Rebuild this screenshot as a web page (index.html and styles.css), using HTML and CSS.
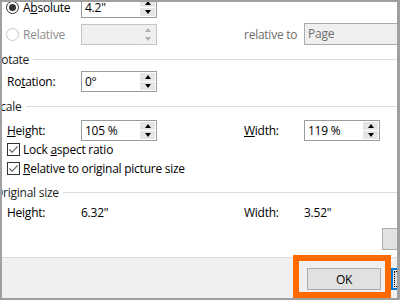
FILE: index.html
```html
<!DOCTYPE html>
<html>
<head>
<meta charset="utf-8">
<link rel="stylesheet" href="styles.css">
</head>
<body>
<div class="frame">
  <div class="content">
    <div class="row r-first">
      <label class="opt"><span class="radio checked"></span><span>A<u>b</u>solute</span></label>
      <div class="box"><span class="val">4.2"</span><span class="spin"><i class="up"></i><i class="down"></i></span></div>
    </div>
    <div class="row r-2">
      <label class="opt disabled"><span class="radio"></span><span>Relative</span></label>
      <div class="box off"><span class="val"></span><span class="spin"><i class="up"></i><i class="down"></i></span></div>
      <span class="gap"></span>
      <span class="lbl dim">relative to</span>
      <div class="combo">Page</div>
    </div>
    <div class="heading h-rotate"><span>Rotate</span><span class="rule"></span></div>
    <div class="row r-rot">
      <span class="lbl">Ro<u>t</u>ation:</span>
      <div class="box"><span class="val">0°</span><span class="spin"><i class="up"></i><i class="down"></i></span></div>
    </div>
    <div class="heading h-scale"><span>Scale</span><span class="rule"></span></div>
    <div class="row r-height">
      <span class="lbl"><u>H</u>eight:</span>
      <div class="box"><span class="val">105 %</span><span class="spin"><i class="up"></i><i class="down"></i></span></div>
      <span class="gap"></span>
      <span class="lbl"><u>W</u>idth:</span>
      <div class="box"><span class="val">119 %</span><span class="spin"><i class="up"></i><i class="down"></i></span></div>
    </div>
    <label class="check c-lock"><span class="cb"><svg width="11" height="11" viewBox="0 0 11 11"><path d="M1.5 5.5 L4.2 8.3 L9.6 2.4" fill="none" stroke="#555" stroke-width="1.1"/></svg></span><span>Lock <u>a</u>spect ratio</span></label>
    <label class="check c-rel"><span class="cb"><svg width="11" height="11" viewBox="0 0 11 11"><path d="M1.5 5.5 L4.2 8.3 L9.6 2.4" fill="none" stroke="#555" stroke-width="1.1"/></svg></span><span><u>R</u>elative to original picture size</span></label>
    <div class="heading h-orig"><span>Original size</span><span class="rule"></span></div>
    <div class="row r-static">
      <span class="lbl">Height:</span>
      <span class="num">6.32"</span>
      <span class="gap"></span>
      <span class="lbl">Width:</span>
      <span class="num">3.52"</span>
    </div>
    <div class="btnrow">
      <button class="btn reset">Reset</button>
    </div>
  </div>
  <div class="footer">
    <div class="highlight"><button class="btn ok">OK</button></div>
    <button class="btn default"><span class="focus">Cancel</span></button>
  </div>
</div>
</body>
</html>
```
FILE: styles.css
```css
* { box-sizing: border-box; }
html, body { margin: 0; padding: 0; }
body {
  width: 400px;
  height: 300px;
  overflow: hidden;
  background: #fff;
  font-family: "Open Sans", "Noto Sans", sans-serif;
  font-size: 12px;
  letter-spacing: -0.25px;
  color: #000;
}
u { text-decoration: underline; text-underline-offset: 1px; }

.frame {
  width: 400px;
  height: 300px;
  border-style: solid;
  border-color: #a0a0a0;
  border-width: 2px 3px 2px 2px;
  overflow: hidden;
  display: flex;
  flex-direction: column;
}
.content {
  height: 255px;
  flex: none;
  display: flex;
  flex-direction: column;
  background: #fff;
}
.row {
  display: grid;
  grid-template-columns: 74px 76px 87px 60px 100px;
  align-items: center;
  padding-left: 5px;
  height: 21px;
  flex: none;
}
.r-first { margin-top: -5px; }
.r-2 { margin-top: 5px; }
.r-rot { margin-top: 4px; }
.r-height { margin-top: 6px; }
.r-static { margin-top: 4px; height: 16px; }

.opt { display: flex; align-items: center; gap: 4px; margin-left: -1px; white-space: nowrap; }
.opt.disabled { color: #8d8d8d; }
.radio {
  width: 13px; height: 13px; border-radius: 50%;
  border: 1px solid #333; background: #fff;
  display: flex; align-items: center; justify-content: center; flex: none;
}
.radio.checked::after {
  content: ""; width: 7px; height: 7px; border-radius: 50%; background: #333;
}
.opt.disabled .radio { border-color: #c6c6c6; }

.lbl { white-space: nowrap; }
.dim { color: #6d6d6d; }
.num { white-space: nowrap; }

.box {
  width: 76px; height: 21px;
  border: 1px solid #9c9c9c;
  background: #fff;
  display: flex;
  align-items: stretch;
  padding: 1px;
}
.box .val { flex: 1; padding-left: 2px; line-height: 17px; }
.box.off { background: #f0f0f0; border-color: #c4c4c4; }
.spin {
  width: 15px;
  display: flex; flex-direction: column; gap: 1px;
  margin-right: 0;
}
.spin i {
  flex: 1;
  background: #e5e5e5;
  display: flex; align-items: center; justify-content: center;
}
.spin i::after {
  content: ""; width: 0; height: 0;
  border-left: 3.5px solid transparent;
  border-right: 3.5px solid transparent;
}
.spin .up::after { border-bottom: 4px solid #000; }
.spin .down::after { border-top: 4px solid #000; }
.box.off .spin i { background: #efefef; }
.box.off .spin .up::after { border-bottom-color: #b0b0b0; }
.box.off .spin .down::after { border-top-color: #b0b0b0; }

.combo {
  width: 100px; height: 22px;
  border: 1px solid #acacac;
  background: #efefef;
  color: #6d6d6d;
  padding-left: 3px;
  line-height: 19px;
}

.heading {
  display: flex; align-items: center; gap: 4px;
  height: 16px; flex: none;
  margin-left: -8px;
  color: #1a1a1a;
  white-space: nowrap;
}
.heading .rule { flex: 1; height: 1px; background: #dcdcdc; }
.h-rotate { margin-top: 7px; }
.h-scale { margin-top: 6px; }
.h-orig { margin-top: 8px; }

.check {
  display: flex; align-items: center; gap: 3px;
  height: 16px; flex: none;
  padding-left: 5px;
  white-space: nowrap;
}
.c-lock { margin-top: 0; }
.c-rel { margin-top: 3px; }
.cb {
  width: 13px; height: 13px; border: 1px solid #333; background: #fff; flex: none;
  display: flex; align-items: center; justify-content: center;
}
.cb svg { display: block; }

.btn {
  font: inherit; letter-spacing: inherit; color: #000;
  background: #e1e1e1; border: 1px solid #adadad;
  height: 22px; padding: 0; flex: none;
}
.btnrow { display: flex; justify-content: flex-end; margin-top: 8px; }
.reset { width: 75px; margin-right: -60px; color: transparent; }

.footer {
  flex: 1;
  background: #f0f0f0;
  border-top: 1px solid #dadada;
  display: flex;
  justify-content: flex-end;
  align-items: flex-start;
}
.highlight {
  margin-top: -3px;
  border: 6px solid #ff6a00;
  padding: 7px 4px 2px 8px;
  flex: none;
}
.ok { width: 74px; display: block; }
.default {
  width: 75px; margin-top: 10px; margin-right: -69px;
  border: 2px solid #0078d7; padding: 1px;
  color: transparent;
}
.default .focus { display: block; height: 100%; border: 1px dotted #000; }
```
